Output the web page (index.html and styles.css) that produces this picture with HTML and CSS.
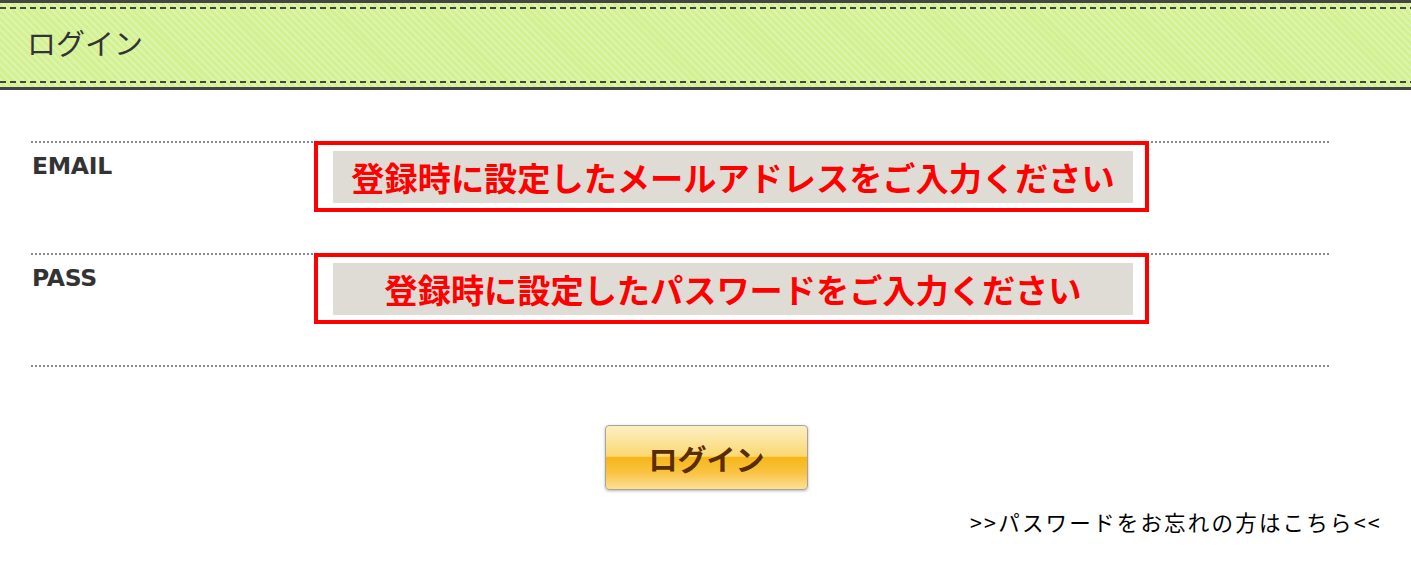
FILE: index.html
```html
<!DOCTYPE html>
<html lang="ja">
<head>
<meta charset="utf-8">
<title>ログイン</title>
<link rel="stylesheet" href="styles.css">
</head>
<body>
<header class="page-head">
  <div class="dash"></div>
  <h1 class="title">ログイン</h1>
  <div class="dash"></div>
</header>
<main class="content">
  <form class="login-form">
    <div class="row">
      <div class="label">EMAIL</div>
      <div class="field">
        <div class="frame">
          <div class="input">登録時に設定したメールアドレスをご入力ください</div>
        </div>
      </div>
    </div>
    <div class="row">
      <div class="label">PASS</div>
      <div class="field">
        <div class="frame">
          <div class="input">登録時に設定したパスワードをご入力ください</div>
        </div>
      </div>
    </div>
    <div class="row-end"></div>
    <div class="actions">
      <button type="button" class="btn">ログイン</button>
    </div>
    <div class="forgot">
      <a href="#" class="forgot-link">&gt;&gt;パスワードをお忘れの方はこちら&lt;&lt;</a>
    </div>
  </form>
</main>
</body>
</html>
```
FILE: styles.css
```css
html, body {
  margin: 0;
  padding: 0;
  background: #fff;
}
body {
  font-family: "Noto Sans CJK JP", "Liberation Sans", sans-serif;
  color: #333;
}
.page-head {
  height: 90px;
  box-sizing: border-box;
  border-top: 3px solid #444;
  border-bottom: 3px solid #444;
  background-color: #d3f193;
  background-image: repeating-linear-gradient(45deg, rgba(255,255,255,0.22) 0 2px, rgba(255,255,255,0) 2px 5px);
  display: flex;
  flex-direction: column;
  padding: 4px 0 4px;
}
.dash {
  height: 2px;
  background-image: repeating-linear-gradient(to right, #444 0 6px, transparent 6px 10px);
}
.title {
  flex: 1;
  margin: 0;
  padding-left: 27px;
  padding-bottom: 5px;
  font-size: 29px;
  font-weight: normal;
  color: #333;
  display: flex;
  align-items: center;
  line-height: 1;
}
.content {
  padding: 51px 31px 0;
}
.login-form {
  margin: 0;
}
.row {
  width: 1300px;
  height: 112px;
  display: flex;
  background-image: repeating-linear-gradient(to right, #8c8c8c 0 2px, transparent 2px 4px);
  background-size: 100% 2px;
  background-repeat: no-repeat;
  background-position: left top;
}
.row-end {
  width: 1300px;
  height: 2px;
  background-image: repeating-linear-gradient(to right, #8c8c8c 0 2px, transparent 2px 4px);
}
.label {
  width: 283px;
  padding-top: 11px;
  padding-left: 1px;
  box-sizing: border-box;
  font-family: "DejaVu Sans", "Liberation Sans", sans-serif;
  font-weight: bold;
  font-size: 23.5px;
  color: #333;
  letter-spacing: -0.3px;
}
.field {
  flex: none;
}
.frame {
  width: 835px;
  height: 71px;
  box-sizing: border-box;
  border: 4px solid #ff0000;
  padding: 6px 12px 5px 15px;
}
.input {
  height: 52px;
  background: #dfdcd5;
  color: #ff0000;
  font-weight: bold;
  font-size: 33.2px;
  display: flex;
  align-items: center;
  justify-content: center;
  line-height: 1;
  white-space: nowrap;
}
.actions {
  display: flex;
  justify-content: center;
  padding-top: 58px;
  padding-left: 2px;
}
.btn {
  width: 203px;
  height: 65px;
  border: 1px solid #a8a29a;
  border-radius: 4px;
  background: linear-gradient(to bottom, #fdefc4 0%, #fbd872 48%, #f7b619 50%, #f9c445 75%, #fde096 100%);
  box-shadow: 0 1px 3px rgba(0,0,0,0.3);
  font-family: "Noto Sans CJK JP", sans-serif;
  font-weight: bold;
  font-size: 29px;
  color: #5a2c04;
  padding: 0;
  cursor: pointer;
}
.forgot {
  display: flex;
  justify-content: flex-end;
  padding-top: 16px;
}
.forgot-link {
  font-size: 21.5px;
  color: #000;
  text-decoration: none;
  letter-spacing: 2.2px;
  margin-right: -2px;
}
```
